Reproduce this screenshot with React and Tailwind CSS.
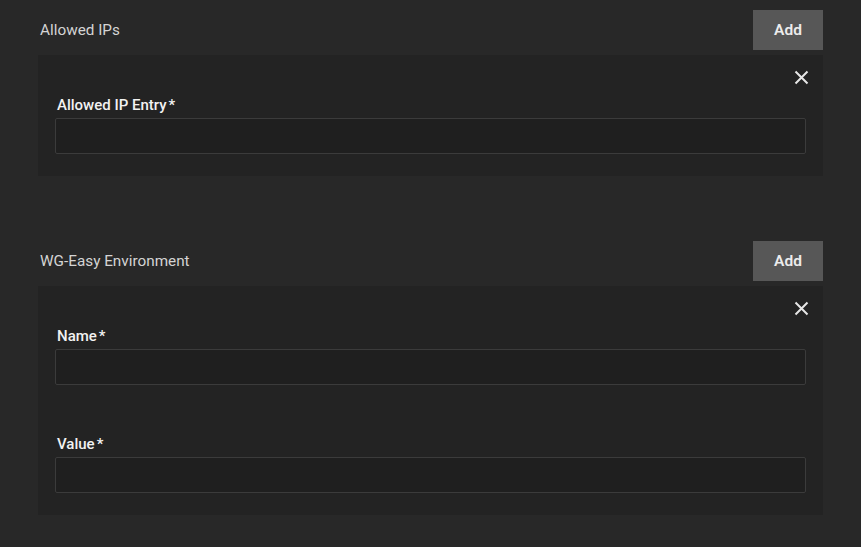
import React from "react";

function CloseIcon() {
  return (
    <svg width="15" height="15" viewBox="0 0 15 15" className="block">
      <path d="M1.5 1.5 L13.5 13.5 M13.5 1.5 L1.5 13.5" stroke="#e6e6e6" strokeWidth="2" strokeLinecap="butt" fill="none" />
    </svg>
  );
}

function Field({ label }) {
  return (
    <div className="flex flex-col">
      <label className="h-[20px] leading-[20px] text-[15px] font-medium text-[#f2f2f2] mb-[3px] pl-[2px]">
        {label}
        <span className="ml-[2px]">*</span>
      </label>
      <div className="h-[36px] rounded-[2px] border border-[#3b3b3b] bg-[#1f1f1f]" />
    </div>
  );
}

function Section({ title, fields }) {
  return (
    <div className="flex flex-col">
      <div className="flex items-center justify-between h-[40px]">
        <span className="text-[15.3px] text-[#d4d4d4] pl-[2px]">{title}</span>
        <button className="w-[70px] h-[40px] pt-[2px] bg-[#575757] text-[15.5px] font-semibold text-[#ececec]">Add</button>
      </div>
      <div className="mt-[5px] bg-[#232323] pt-[15px] pb-[22px] px-[17px]">
        <div className="flex justify-end h-[15px] mr-[-3px] mb-[10px]">
          <CloseIcon />
        </div>
        <div className="flex flex-col gap-[49px]">
          {fields.map((f) => (
            <Field key={f} label={f} />
          ))}
        </div>
      </div>
    </div>
  );
}

export default function App() {
  return (
    <div
      className="w-[861px] h-[547px] bg-[#282828] overflow-hidden"
      style={{ fontFamily: "Roboto, 'Liberation Sans', sans-serif" }}
    >
      <div className="ml-[38px] w-[785px] pt-[10px] flex flex-col gap-[65px]">
        <Section title="Allowed IPs" fields={["Allowed IP Entry"]} />
        <Section title="WG-Easy Environment" fields={["Name", "Value"]} />
      </div>
    </div>
  );
}
